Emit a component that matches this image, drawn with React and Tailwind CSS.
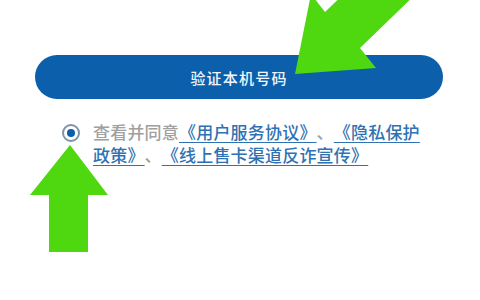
import React from "react";

export default function App() {
  return (
    <div
      className="relative w-[480px] h-[300px] overflow-hidden bg-white [text-spacing-trim:space-all]"
      style={{ fontFamily: '"Noto Sans CJK SC", "Noto Sans", sans-serif' }}
    >
      <div className="flex flex-col pt-[55px]">
        <div className="mx-[35px] h-[44px] w-[408px] rounded-full bg-[#0b5fab] flex items-center justify-center">
          <span className="text-[15px] font-medium tracking-[1.2px] text-[#f2f6fb] leading-none">验证本机号码</span>
        </div>
        <div className="flex items-start pl-[62px] pt-[25px]">
          <div className="w-[18px] h-[18px] shrink-0 rounded-full border-2 border-[#7f93ab] flex items-center justify-center">
            <div className="w-[8px] h-[8px] rounded-full bg-[#0b5fab]" />
          </div>
          <div className="ml-[13px] -mt-[4px] w-[345px] text-[17px] font-medium leading-[23px] tracking-[0.2px]">
            <div className="whitespace-nowrap">
              <span className="text-[#a0a0a0]">查看并同意</span>
              <span className="text-[#2f72b3] underline underline-offset-[3px] decoration-1">《用户服务协议》</span>
              <span className="text-[#a0a0a0]">、</span>
              <span className="text-[#2f72b3] underline underline-offset-[3px] decoration-1">《隐私保护</span>
            </div>
            <div className="whitespace-nowrap">
              <span className="text-[#2f72b3] underline underline-offset-[3px] decoration-1">政策》</span>
              <span className="text-[#a0a0a0]">、</span>
              <span className="text-[#2f72b3] underline underline-offset-[3px] decoration-1">《线上售卡渠道反诈宣传》</span>
            </div>
          </div>
        </div>
      </div>

      <svg
        className="absolute left-0 top-0 pointer-events-none"
        width="480"
        height="300"
        viewBox="0 0 480 300"
      >
        <polygon
          points="295,74 376,68 360,48 420,-10 352,-14 325,12 311,-6"
          fill="#4fd80f"
        />
        <polygon
          points="70,145 108,195 88,195 88,252 49,252 49,195 30,195"
          fill="#4fd80f"
        />
      </svg>
    </div>
  );
}
